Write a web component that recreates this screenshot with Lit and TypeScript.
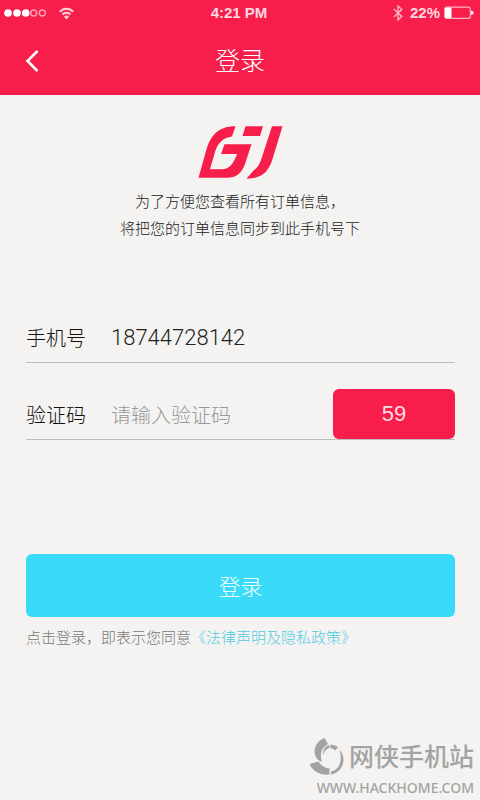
import { LitElement, html, css } from "lit";
import { customElement, state } from "lit/decorators.js";

@customElement("status-bar")
class StatusBar extends LitElement {
  static styles = css`
    :host {
      display: grid;
      grid-template-columns: 1fr auto 1fr;
      align-items: center;
      height: 26px;
      padding: 0 6px 0 4px;
      color: #ffd9e0;
      font: 700 15px/26px "Liberation Sans", sans-serif;
    }
    .side {
      display: flex;
      align-items: center;
    }
    .left {
      gap: 12px;
    }
    .right {
      justify-content: flex-end;
      gap: 4px;
    }
    .bluetooth {
      margin-right: 3px;
    }
    svg {
      display: block;
    }
  `;

  render() {
    return html`
      <div class="side left">
        <svg width="43" height="10" viewBox="0 0 43 10" fill="#fff" aria-label="信号">
          <circle cx="4" cy="5" r="3.8" />
          <circle cx="13" cy="5" r="3.8" />
          <circle cx="21.700" cy="5" r="3.8" />
          <g fill="none" stroke="#ffa3b5" stroke-width="1.4">
            <circle cx="29.700" cy="5" r="3" />
            <circle cx="38.300" cy="5" r="3" />
          </g>
        </svg>
        <svg width="15" height="13" viewBox="0 0 15 13" fill="none" stroke="#ffd0d9" stroke-width="2" aria-label="无线网络">
          <path d="M0.800 4.700C4.600 0.600 10.400 0.600 14.200 4.700" />
          <path d="M3.400 7.500C5.700 5 9.300 5 11.600 7.500" />
          <path d="M7.500 12.400L4.900 9.700C6.400 8.200 8.600 8.200 10.100 9.700Z" fill="#ffd0d9" stroke="none" />
        </svg>
      </div>
      <time>4:21 PM</time>
      <div class="side right">
        <svg class="bluetooth" width="10" height="16" viewBox="0 0 10 16" fill="none" stroke="#ffb3c1" stroke-width="1.400" aria-label="蓝牙">
          <path d="M0.800 4L8.800 11.500L5 15V1L8.800 4.500L0.800 12" />
        </svg>
        <span>22%</span>
        <svg width="30" height="14" viewBox="0 0 30 14" aria-label="电量">
          <rect x="0.700" y="1.200" width="25.600" height="11.200" rx="2" fill="none" stroke="#ffb3c1" stroke-width="1.200" />
          <rect x="1" y="1.600" width="6.500" height="10.400" rx="1" fill="#fff" />
          <path d="M27 4.500Q29.800 5.200 29.800 6.800T27 9.200Z" fill="#ffe3e8" />
        </svg>
      </div>
    `;
  }
}

@customElement("app-root")
class AppRoot extends LitElement {
  @state() private phone = "18744728142";
  @state() private code = "";
  @state() private seconds = 59;

  static styles = css`
    :host {
      display: flex;
      flex-direction: column;
      min-height: 100vh;
      background: #f4f3f1;
      color: #222;
      font-family: "Noto Sans CJK SC", sans-serif;
      font-weight: 300;
    }
    * {
      box-sizing: border-box;
    }
    svg {
      display: block;
    }
    button,
    input {
      margin: 0;
      padding: 0;
      border: 0;
      font: inherit;
      background: none;
    }
    .top {
      background: #f71e4b;
    }
    .nav {
      display: grid;
      grid-template-columns: 64px 1fr 64px;
      align-items: center;
      height: 69px;
    }
    .back {
      display: flex;
      align-items: center;
      justify-content: center;
      height: 48px;
      color: #fff;
    }
    h1 {
      margin: 0;
      padding-bottom: 4px;
      text-align: center;
      color: #fff;
      font-size: 25px;
      line-height: 36px;
      font-weight: 300;
    }
    .intro {
      display: flex;
      flex-direction: column;
      align-items: center;
      gap: 7px;
      padding-top: 31px;
    }
    .intro p {
      margin: 0;
      text-align: center;
      font-size: 15px;
      line-height: 27px;
    }
    form {
      display: flex;
      flex-direction: column;
      padding: 71px 25px 0 26px;
    }
    .field {
      display: flex;
      align-items: center;
      height: 51px;
      border-bottom: 1px solid #bdbdbd;
      font-size: 20px;
      color: #111;
    }
    .field + .field {
      margin-top: 26px;
    }
    .field label {
      flex: none;
      width: 85px;
    }
    .field input {
      flex: 1;
      min-width: 0;
      height: 48px;
      outline: none;
      color: #111;
    }
    .field .phone {
      font-family: Roboto, "Noto Sans CJK SC", sans-serif;
      font-size: 22px;
      color: #222;
    }
    .field input::placeholder {
      color: #999;
      opacity: 1;
    }
    .timer {
      flex: none;
      width: 122px;
      height: 50px;
      border-radius: 6px;
      background: #f71e4b;
      color: #ffdbe2;
      font-family: "Liberation Sans", sans-serif;
      font-size: 22px;
    }
    .submit {
      height: 63px;
      margin-top: 114px;
      padding-bottom: 2px;
      border-radius: 6px;
      background: #3adbf9;
      color: #effdff;
      font-size: 22px;
    }
    .terms {
      margin: 8px 0 0;
      color: #777;
      font-size: 15px;
      line-height: 24px;
    }
    .terms a {
      color: #4fcbe2;
      text-decoration: none;
    }
    footer {
      display: grid;
      grid-template-columns: auto auto;
      justify-content: end;
      align-items: center;
      column-gap: 4px;
      margin-top: auto;
      padding: 16px 6px 2px 0;
      color: #a3a3a3;
    }
    .site {
      padding-bottom: 4px;
      font-size: 25px;
      line-height: 38px;
      font-weight: 500;
    }
    .address {
      grid-column: 1 / -1;
      font: 500 14px/20px "Noto Sans", sans-serif;
      text-align: right;
    }
  `;

  private setPhone(e: Event) {
    this.phone = (e.target as HTMLInputElement).value;
  }

  private setCode(e: Event) {
    this.code = (e.target as HTMLInputElement).value;
  }

  private submit(e: Event) {
    e.preventDefault();
  }

  render() {
    return html`
      <header class="top">
        <status-bar></status-bar>
        <div class="nav">
          <button class="back" type="button" aria-label="返回">
            <svg width="14" height="22" viewBox="0 0 14 22" fill="none" stroke="currentColor" stroke-width="2.600">
              <path d="M12.500 1L2.500 11L12.500 21" />
            </svg>
          </button>
          <h1>登录</h1>
        </div>
      </header>

      <section class="intro">
        <svg width="86" height="54" viewBox="0 0 86 54" fill="#f71e4b" aria-label="GJ">
          <path d="M38.500 0.300L35 10.500C25.500 12 20.500 17.500 18 26L13 43.300H25C32 43.300 36.500 38 40 28H24L27.500 18.300H54.500L48 38C44.500 47.500 39 51.800 30 51.800H1.500L9 25C13.500 8.500 22 0.300 38.500 0.300Z" />
          <path d="M48.500 0.300H66L63 10H45.500Z" />
          <path d="M75 0.300H85.500L75.500 33C71.500 46.500 64 52.700 49.500 52.700L56.500 44.500C61 41.500 62.500 38 64.500 32.500Z" />
        </svg>
        <p>为了方便您查看所有订单信息，<br />将把您的订单信息同步到此手机号下</p>
      </section>

      <form @submit=${this.submit}>
        <div class="field">
          <label for="phone">手机号</label>
          <input id="phone" class="phone" type="tel" .value=${this.phone} @input=${this.setPhone} />
        </div>
        <div class="field">
          <label for="code">验证码</label>
          <input id="code" type="text" inputmode="numeric" placeholder="请输入验证码" .value=${this.code} @input=${this.setCode} />
          <button class="timer" type="button">${this.seconds}</button>
        </div>
        <button class="submit" type="submit">登录</button>
        <p class="terms">点击登录，即表示您同意<a href="#terms">《法律声明及隐私政策》</a></p>
      </form>

      <footer>
        <svg width="36" height="40" viewBox="0 0 36 40" fill="#a3a3a3" aria-hidden="true">
          <path d="M15.500 1L19 7C12.500 10.500 10.500 17 13 25L10 23.500C2 17 5.500 4.500 15.500 1Z" />
          <path d="M0.500 27L9.500 24.500C12.500 29 15.500 31 20.500 31.500V37.500C11 38.500 4 34.500 0.500 27Z" />
          <path d="M14 18C14 12 16 9 20 8L21 10.500C17.500 12 15.500 14 14 18ZM21 7.800C24 7.300 27 8.300 29 10.500L26 13.500C24.500 12 23 11.500 21.800 11.500Z" />
          <path d="M30.500 12.500C39 22 33 36 22 37.500V34.500C30 33 34 24 30.500 12.500Z" />
        </svg>
        <span class="site">网侠手机站</span>
        <span class="address">WWW.HACKHOME.COM</span>
      </footer>
    `;
  }
}
